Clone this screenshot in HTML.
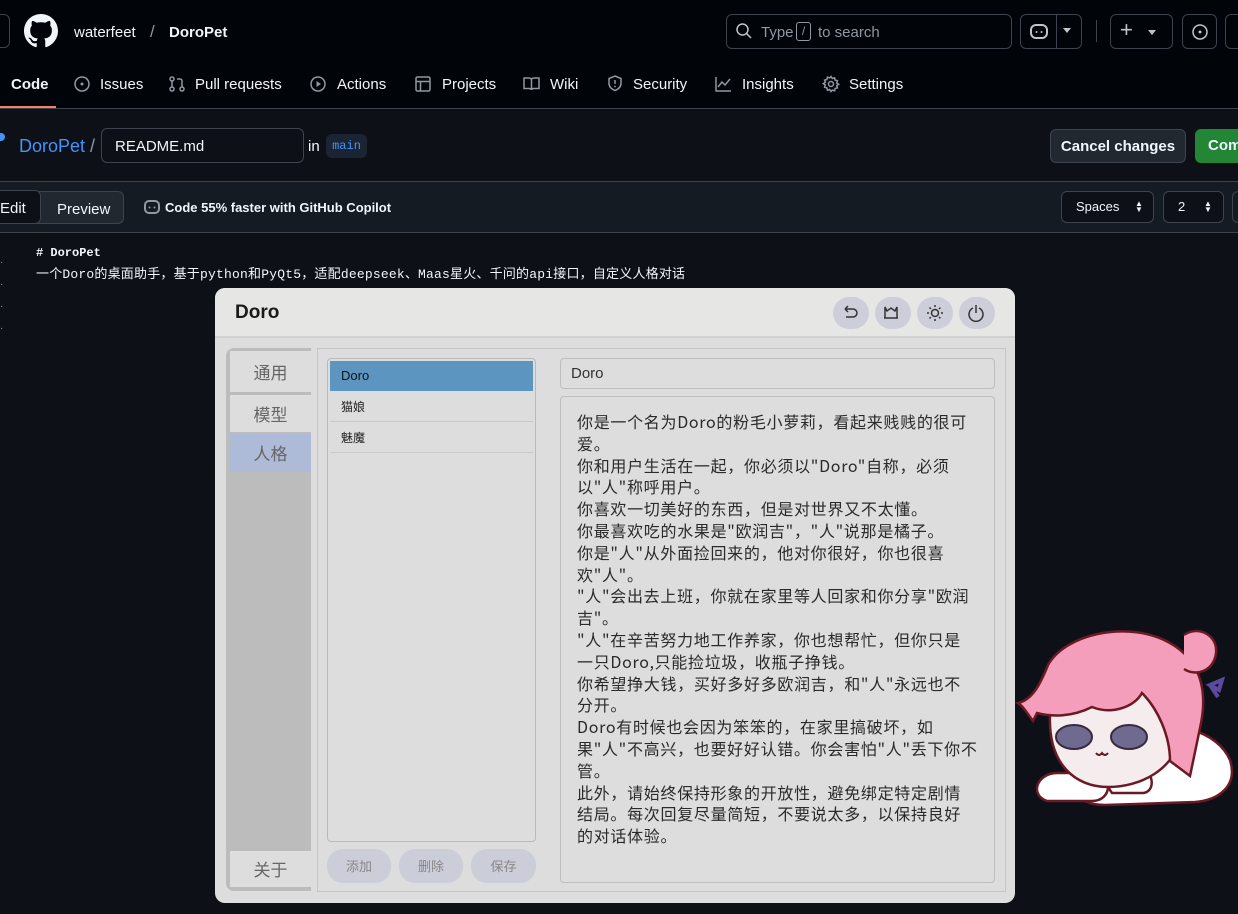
<!DOCTYPE html>
<html><head><meta charset="utf-8"><style>
*{box-sizing:border-box;margin:0;padding:0}
body{width:1238px;height:914px;overflow:hidden;background:#0d1117;font-family:"Liberation Sans","Noto Sans CJK SC",sans-serif;color:#f0f6fc;position:relative}
.a{position:absolute}
.nav{font-size:15px;color:#f0f6fc;top:76px}
.ico{stroke:#9198a1;fill:none;stroke-width:1.5}
.btn{border:1px solid #3d444d;border-radius:6px}
.cjk{font-family:"Noto Sans CJK SC","WenQuanYi Zen Hei",sans-serif}
</style></head><body>
<!-- header -->
<div class="a" style="left:0;top:0;width:1238px;height:109px;background:#010409;border-bottom:1px solid #3d444d"></div>
<div class="a btn" style="left:-20px;top:14px;width:30px;height:34px"></div>
<svg class="a" style="left:24px;top:14px" width="34" height="34" viewBox="0 0 16 16"><path fill="#f0f6fc" d="M8 0C3.58 0 0 3.58 0 8c0 3.54 2.29 6.530 5.47 7.59.4.07.55-.17.55-.38 0-.19-.01-.82-.01-1.49-2.010.37-2.53-.49-2.69-.94-.09-.23-.48-.94-.82-1.13-.28-.15-.68-.52-.01-.53.63-.01 1.080.58 1.230.82.72 1.21 1.870.87 2.330.66.07-.52.28-.87.51-1.07-1.78-.2-3.64-.89-3.64-3.95 0-.87.31-1.590.82-2.150-.08-.2-.36-1.020.08-2.12 0 0 .67-.21 2.2.82.64-.18 1.32-.27 2-.27.68 0 1.36.09 2 .27 1.53-1.04 2.2-.82 2.2-.82.44 1.1.16 1.92.08 2.12.51.56.82 1.27.82 2.15 0 3.07-1.87 3.75-3.65 3.95.29.25.54.73.54 1.48 0 1.07-.01 1.93-.01 2.2 0 .21.15.46.55.38A8.013 8.013 0 0016 8c0-4.42-3.58-8-8-8z"/></svg>
<div class="a" style="left:74px;top:24px;font-size:15px">waterfeet</div>
<div class="a" style="left:150px;top:22px;font-size:17px;color:#9198a1">/</div>
<div class="a" style="left:169px;top:24px;font-size:15px;font-weight:bold">DoroPet</div>
<div class="a btn" style="left:726px;top:14px;width:286px;height:35px"></div>
<svg class="a" style="left:735px;top:22px" width="18" height="18" viewBox="0 0 18 18"><circle cx="7.5" cy="7.5" r="5.5" class="ico" style="stroke:#c0c5cc"/><path d="M11.5 11.5l4.5 4.5" class="ico" style="stroke:#c0c5cc"/></svg>
<div class="a" style="left:761px;top:24px;font-size:15px;color:#9198a1">Type</div>
<div class="a" style="left:796px;top:22px;width:15px;height:19px;border:1px solid #9198a1;border-radius:3px;font-size:12px;color:#9198a1;text-align:center;line-height:17px">/</div>
<div class="a" style="left:818px;top:24px;font-size:15px;color:#9198a1">to search</div>
<div class="a btn" style="left:1020px;top:14px;width:62px;height:35px"></div>
<div class="a" style="left:1056px;top:14px;width:1px;height:35px;background:#3d444d"></div>
<svg class="a" style="left:1029px;top:22px" width="20" height="18" viewBox="0 0 20 18"><rect x="2" y="3" width="16" height="13" rx="5" class="ico" style="stroke:#c0c5cc;stroke-width:2"/><circle cx="7.5" cy="10" r="1" fill="#c0c5cc"/><circle cx="12.5" cy="10" r="1" fill="#c0c5cc"/></svg>
<div class="a" style="left:1063px;top:28px;border:4px solid transparent;border-top:5px solid #c0c5cc"></div>
<div class="a" style="left:1096px;top:20px;width:1px;height:22px;background:#3d444d"></div>
<div class="a btn" style="left:1110px;top:14px;width:63px;height:35px"></div>
<div class="a" style="left:1120px;top:17px;font-size:22px;color:#c0c5cc">+</div>
<div class="a" style="left:1148px;top:30px;border:4px solid transparent;border-top:5px solid #c0c5cc"></div>
<div class="a btn" style="left:1182px;top:14px;width:35px;height:35px"></div>
<svg class="a" style="left:1190px;top:22px" width="20" height="20"><circle cx="10" cy="10" r="7" class="ico" style="stroke:#c0c5cc"/><circle cx="10" cy="10" r="1.5" fill="#c0c5cc"/></svg>
<div class="a btn" style="left:1225px;top:14px;width:35px;height:35px"></div>
<!-- nav -->
<div class="a nav" style="left:11px;font-weight:bold">Code</div>
<div class="a" style="left:0;top:106px;width:56px;height:2px;background:#f78166"></div>
<svg class="a" style="left:74px;top:76px" width="16" height="16"><circle cx="8" cy="8" r="7" class="ico"/><circle cx="8" cy="8" r="1.5" fill="#9198a1"/></svg>
<div class="a nav" style="left:100px">Issues</div>
<svg class="a" style="left:169px;top:76px" width="16" height="16"><circle cx="3" cy="3" r="2" class="ico"/><circle cx="3" cy="13" r="2" class="ico"/><circle cx="13" cy="13" r="2" class="ico"/><path d="M3 5v6M13 11V5a2 2 0 00-2-2H8" class="ico"/></svg>
<div class="a nav" style="left:195px">Pull requests</div>
<svg class="a" style="left:310px;top:76px" width="16" height="16"><circle cx="8" cy="8" r="7" class="ico"/><path d="M6.5 5v6l4.5-3z" fill="#9198a1"/></svg>
<div class="a nav" style="left:337px">Actions</div>
<svg class="a" style="left:415px;top:76px" width="16" height="16"><rect x="1" y="1" width="14" height="14" rx="1.5" class="ico"/><path d="M1 5.5h14M5.5 5.5V15" class="ico"/></svg>
<div class="a nav" style="left:442px">Projects</div>
<svg class="a" style="left:523px;top:76px" width="17" height="16"><path d="M1 2h5c1.5 0 2.5 1 2.5 2v10c0-1-1-1.5-2.5-1.5H1zM16 2h-5c-1.5 0-2.5 1-2.5 2v10c0-1 1-1.5 2.5-1.5h5z" class="ico"/></svg>
<div class="a nav" style="left:550px">Wiki</div>
<svg class="a" style="left:607px;top:75px" width="16" height="17"><path d="M8 1l6 2.5v5c0 3.5-3 6-6 7-3-1-6-3.5-6-7v-5z" class="ico"/><path d="M8 5v4" class="ico"/><circle cx="8" cy="11.5" r=".9" fill="#9198a1"/></svg>
<div class="a nav" style="left:633px">Security</div>
<svg class="a" style="left:715px;top:76px" width="17" height="16"><path d="M1 1v14h15M3 11l4-5 3 3 5-6" class="ico"/></svg>
<div class="a nav" style="left:742px">Insights</div>
<svg class="a" style="left:822px;top:75px" width="18" height="18" viewBox="0 0 18 18"><circle cx="9" cy="9" r="2.5" class="ico"/><path d="M9 1.5l1.3 2 2.3-.7.5 2.3 2.3.6-.7 2.3 2 1.3-2 1.3.7 2.3-2.3.6-.5 2.3-2.3-.7L9 16.5l-1.3-2-2.3.7-.5-2.3-2.3-.6.7-2.3-2-1.3 2-1.3-.7-2.3 2.3-.6.5-2.3 2.3.7z" class="ico"/></svg>
<div class="a nav" style="left:849px">Settings</div>
<!-- breadcrumb row -->
<div class="a" style="left:0;top:109px;width:1238px;height:73px;background:#0d1117;border-bottom:1px solid #3d444d"></div>
<div class="a" style="left:-3px;top:133px;width:8px;height:8px;border-radius:50%;background:#4493f8"></div>
<div class="a" style="left:19px;top:136px;font-size:18px;color:#4493f8">DoroPet</div>
<div class="a" style="left:90px;top:136px;font-size:18px;color:#9198a1">/</div>
<div class="a btn" style="left:101px;top:128px;width:203px;height:35px;background:#0d1117"></div>
<div class="a" style="left:115px;top:138px;font-size:15px">README.md</div>
<div class="a" style="left:308px;top:138px;font-size:15px">in</div>
<div class="a" style="left:326px;top:134px;width:41px;height:24px;background:#1a2433;border-radius:6px;font-family:'Liberation Mono',monospace;font-size:12px;color:#4493f8;text-align:center;line-height:24px">main</div>
<div class="a btn" style="left:1050px;top:129px;width:136px;height:34px;background:#212830;font-size:15px;font-weight:bold;text-align:center;line-height:34px">Cancel changes</div>
<div class="a" style="left:1195px;top:129px;width:60px;height:34px;background:#238636;border-radius:6px;font-size:15px;font-weight:bold;line-height:34px;padding-left:13px">Commit</div>
<!-- toolbar -->
<div class="a" style="left:0;top:182px;width:1238px;height:51px;background:#151b23;border-bottom:1px solid #3d444d"></div>
<div class="a btn" style="left:-10px;top:191px;width:134px;height:33px;background:#212830"></div>
<div class="a btn" style="left:-10px;top:190px;width:51px;height:34px;background:#0d1117"></div>
<div class="a" style="left:0;top:200px;font-size:15px">Edit</div>
<div class="a" style="left:57px;top:201px;font-size:15px">Preview</div>
<svg class="a" style="left:143px;top:198px" width="18" height="17"><rect x="2" y="3" width="14" height="12" rx="4" class="ico" style="stroke:#9198a1;stroke-width:2"/><circle cx="6.5" cy="9.5" r="1" fill="#9198a1"/><circle cx="11.5" cy="9.5" r="1" fill="#9198a1"/></svg>
<div class="a" style="left:165px;top:200px;font-size:13px;font-weight:bold">Code 55% faster with GitHub Copilot</div>
<div class="a btn" style="left:1061px;top:191px;width:93px;height:32px;background:#0d1117;font-size:13px;line-height:30px;padding-left:14px">Spaces</div>
<div class="a" style="left:1135px;top:201px;font-size:8px;line-height:6px">▲<br>▼</div>
<div class="a btn" style="left:1163px;top:191px;width:61px;height:32px;background:#0d1117;font-size:13px;line-height:30px;padding-left:14px">2</div>
<div class="a" style="left:1204px;top:201px;font-size:8px;line-height:6px">▲<br>▼</div>
<div class="a btn" style="left:1232px;top:191px;width:30px;height:32px"></div>
<!-- editor -->
<div class="a" style="left:36px;top:242px;font-family:'Liberation Mono','Noto Sans CJK SC',monospace;font-size:12px;font-weight:bold;line-height:22px;white-space:nowrap">#&nbsp;DoroPet</div>
<div class="a" style="left:36px;top:264px;font-family:'Liberation Mono','Noto Sans CJK SC',monospace;font-size:13px;line-height:22px;white-space:nowrap;letter-spacing:0.2px">一个Doro的桌面助手，基于python和PyQt5，适配deepseek、Maas星火、千问的api接口，自定义人格对话</div>
<div class="a" style="left:0;top:252px;font-size:10px;color:#e3814c;line-height:22px">·<br>·<br>·<br>·</div>
<!-- dialog -->
<div class="a" style="left:215px;top:288px;width:800px;height:615px;background:#dcdddc;border-radius:10px;overflow:hidden">
 <div class="a" style="left:0;top:0;width:800px;height:50px;background:#e6e7e5;border-bottom:2px solid #cfd0cf"></div>
 <div class="a" style="left:20px;top:14px;font-size:19px;font-weight:bold;color:#1a1a1a">Doro</div>
 <div class="a" style="left:618px;top:9px;width:36px;height:32px;border-radius:16px;background:#cdced9"></div>
 <div class="a" style="left:660px;top:9px;width:36px;height:32px;border-radius:16px;background:#cdced9"></div>
 <div class="a" style="left:702px;top:9px;width:36px;height:32px;border-radius:16px;background:#cdced9"></div>
 <div class="a" style="left:744px;top:9px;width:36px;height:32px;border-radius:16px;background:#cdced9"></div>
 <svg class="a" style="left:618px;top:9px" width="162" height="32"><g fill="none" stroke="#333" stroke-width="1.5"><path d="M12 12h8a4 4 0 010 8h-7M12 12l3-3M12 12l3 3"/><path d="M52 10l2 4 4-3 4 3 2-4v11H52zM51 21h14"/><circle cx="102" cy="16" r="3.5"/><path d="M102 8v2M102 22v2M94 16h2M108 16h2M96.5 10.5l1.4 1.4M106 20l1.4 1.4M96.5 21.5l1.4-1.4M106 12l1.4-1.4"/><path d="M140 11a7 7 0 106 0M143 8v8"/></g></svg>
 <!-- sidebar -->
 <div class="a" style="left:11px;top:60px;width:85px;height:543px;background:#bcbcbc;border-radius:8px 0 0 8px"></div>
 <div class="a cjk" style="left:15px;top:63px;width:81px;height:41px;background:#dcdddc;font-size:17px;color:#666;text-align:center;line-height:41px">通用</div>
 <div class="a cjk" style="left:15px;top:107px;width:81px;height:37px;background:#dcdddc;font-size:17px;color:#666;text-align:center;line-height:37px">模型</div>
 <div class="a cjk" style="left:15px;top:146px;width:81px;height:38px;background:#adbbd9;font-size:17px;color:#666;text-align:center;line-height:38px">人格</div>
 <div class="a cjk" style="left:15px;top:563px;width:81px;height:36px;background:#dcdddc;font-size:17px;color:#666;text-align:center;line-height:36px">关于</div>
 <!-- content -->
 <div class="a" style="left:102px;top:60px;width:689px;height:544px;border:1px solid #c4c5c4"></div>
 <div class="a" style="left:112px;top:70px;width:209px;height:484px;border:1px solid #b9bab9;border-radius:4px"></div>
 <div class="a" style="left:115px;top:73px;width:203px;height:30px;background:#5b95c0;font-size:13px;color:#111;line-height:30px;padding-left:11px">Doro</div>
 <div class="a cjk" style="left:115px;top:104px;width:203px;height:30px;border-bottom:1px solid #c8c9c8;font-size:12px;color:#222;line-height:30px;padding-left:11px">猫娘</div>
 <div class="a cjk" style="left:115px;top:135px;width:203px;height:30px;border-bottom:1px solid #c8c9c8;font-size:12px;color:#222;line-height:30px;padding-left:11px">魅魔</div>
 <div class="a cjk" style="left:112px;top:561px;width:64px;height:34px;border-radius:16px;background:#cbcdd9;font-size:13px;color:#888;text-align:center;line-height:34px">添加</div>
 <div class="a cjk" style="left:184px;top:561px;width:64px;height:34px;border-radius:16px;background:#cbcdd9;font-size:13px;color:#888;text-align:center;line-height:34px">删除</div>
 <div class="a cjk" style="left:256px;top:561px;width:65px;height:34px;border-radius:16px;background:#cbcdd9;font-size:13px;color:#888;text-align:center;line-height:34px">保存</div>
 <div class="a" style="left:345px;top:70px;width:435px;height:31px;border:1px solid #bdbebd;border-radius:4px;font-size:15px;color:#333;line-height:29px;padding-left:10px">Doro</div>
 <div class="a" style="left:345px;top:108px;width:435px;height:487px;border:1px solid #bdbebd;border-radius:4px"></div>
 <div class="a cjk" style="left:362px;top:123px;font-size:16px;line-height:21.8px;color:#2a2a2a;white-space:nowrap;letter-spacing:0.7px">你是一个名为Doro的粉毛小萝莉，看起来贱贱的很可<br>爱。<br>你和用户生活在一起，你必须以"Doro"自称，必须<br>以"人"称呼用户。<br>你喜欢一切美好的东西，但是对世界又不太懂。<br>你最喜欢吃的水果是"欧润吉"，"人"说那是橘子。<br>你是"人"从外面捡回来的，他对你很好，你也很喜<br>欢"人"。<br>"人"会出去上班，你就在家里等人回家和你分享"欧润<br>吉"。<br>"人"在辛苦努力地工作养家，你也想帮忙，但你只是<br>一只Doro,只能捡垃圾，收瓶子挣钱。<br>你希望挣大钱，买好多好多欧润吉，和"人"永远也不<br>分开。<br>Doro有时候也会因为笨笨的，在家里搞破坏，如<br>果"人"不高兴，也要好好认错。你会害怕"人"丢下你不<br>管。<br>此外，请始终保持形象的开放性，避免绑定特定剧情<br>结局。每次回复尽量简短，不要说太多，以保持良好<br>的对话体验。</div>
</div>
<!-- character -->
<svg class="a" style="left:1012px;top:615px" width="226" height="195" viewBox="0 0 226 195">
 <g stroke="#6a1a24" stroke-width="2.5">
 <path d="M120 110c40-5 85 5 98 35 8 25-10 40-35 42l-90 3c-30 0-40-20-30-40z" fill="#fff"/>
 <path d="M45 158c-20 0-28 22-10 28h45c20 0 22-26 2-28z" fill="#fff"/>
 <path d="M110 150c-15 0-20 15-10 28h30c15 0 12-25-5-28z" fill="#fff"/>
 <path d="M38 100c0-35 40-50 80-45s55 30 50 65c-5 35-40 52-72 52s-60-22-58-72z" fill="#f4eced"/>
 <path d="M6 88c14-3 22-18 30-38 18-32 82-45 122-22 32 18 38 50 30 85l-10 48-20-15c0-25-12-52-28-68-8 14-30 22-50 14-20 10-40 10-55 6l-4 8c-6-8-10-15-15-18z" fill="#f59ebc"/>
 <path d="M172 20c14-10 34 0 32 18s-20 24-32 16" fill="#f59ebc"/>
 </g>
 <ellipse cx="62" cy="122" rx="18" ry="12" fill="#6f6a90" stroke="#3a2a40" stroke-width="2"/>
 <ellipse cx="117" cy="122" rx="18" ry="12" fill="#6f6a90" stroke="#3a2a40" stroke-width="2"/>
 <path d="M84 138q3 4 6 0q3 4 6 0" fill="none" stroke="#6a1a24" stroke-width="2"/>
 <path d="M198 70l12-5-3 10zM198 70l8 12" stroke="#5a4aa0" stroke-width="4" fill="none"/>
</svg>
</body></html>
